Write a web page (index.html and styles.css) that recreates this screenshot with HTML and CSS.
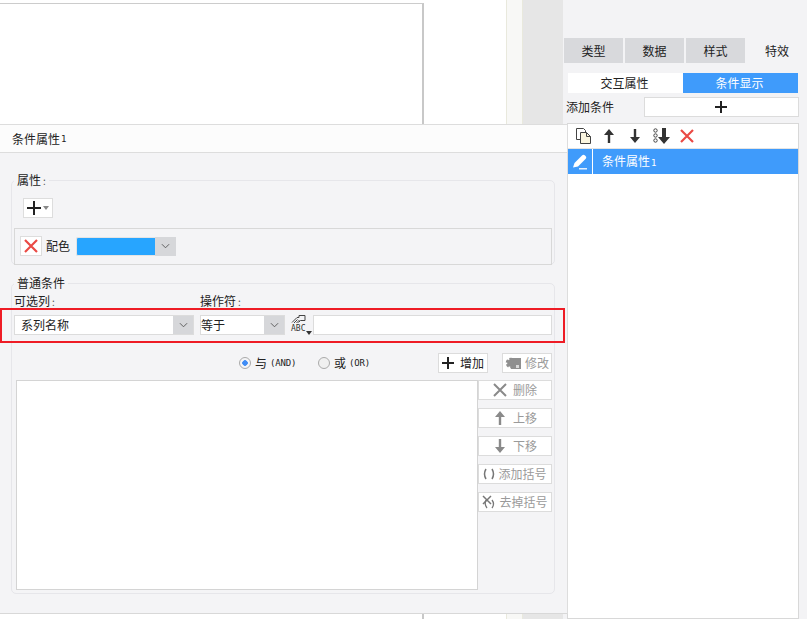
FILE: index.html
```html
<!DOCTYPE html>
<html lang="zh">
<head>
<meta charset="utf-8">
<title>条件属性</title>
<link rel="stylesheet" href="styles.css">
</head>
<body>
<div class="stage">
  <div class="canvas"><div class="paper"></div></div>
  <div class="strip"></div>
  <div class="gutter"></div>
  <aside class="panel">
    <nav class="tabs">
      <div class="tab">类型</div>
      <div class="tab">数据</div>
      <div class="tab">样式</div>
      <div class="tab tab-on">特效</div>
    </nav>
    <div class="subtabs">
      <div class="subtab">交互属性</div>
      <div class="subtab subtab-on">条件显示</div>
    </div>
    <div class="addrow">
      <span class="addlabel">添加条件</span>
      <div class="addbox">
        <svg class="i14" viewBox="0 0 14 14"><path d="M7 1v12M1 7h12" stroke="#222" stroke-width="2" fill="none"/></svg>
      </div>
    </div>
    <div class="list">
      <div class="listbar">
        <svg class="i18" viewBox="0 0 18 18"><path d="M1.500 1.500h7l2 2v2M1.500 1.500v11h4" fill="#fff" stroke="#444"/><path d="M5.500 5.500h6l4 4v7h-10z" fill="#fbf6e0" stroke="#444"/><path d="M11.500 5.500v4h4" fill="none" stroke="#444"/></svg>
        <svg class="i14 up" viewBox="0 0 14 14"><path d="M7 0l5 6H8.200v8H5.800V6H2z" fill="#333"/></svg>
        <svg class="i14 down" viewBox="0 0 14 14"><path d="M5.800 0h2.400v8H12l-5 6-5-6h3.800z" fill="#333"/></svg>
        <svg class="all" viewBox="0 0 17 16"><circle cx="2.500" cy="2.500" r="1.700" fill="none" stroke="#444"/><circle cx="2.500" cy="7.500" r="1.700" fill="none" stroke="#444"/><circle cx="2.500" cy="12.500" r="1.700" fill="none" stroke="#444"/><path d="M9 0h4v9h4l-6 7-6-7h4z" fill="#333"/></svg>
        <svg class="i14 del" viewBox="0 0 14 14"><path d="M1 1l12 12M13 1L1 13" stroke="#ea4a45" stroke-width="2.200" fill="none"/></svg>
      </div>
      <div class="listrow">
        <div class="pencil">
          <svg class="i16" viewBox="0 0 16 16"><path d="M1 13.500l1.500-4.500L10 1.500c1-1 2-1 3 0l.5.500c1 1 1 2 0 3L6 12.500z" fill="#fff"/><path d="M7 14.800h8" stroke="#fff" stroke-width="1.300"/></svg>
        </div>
        <div class="rowtext">条件属性<span class="latin">1</span></div>
      </div>
    </div>
  </aside>

  <section class="dialog">
    <header class="dhead">条件属性<span class="latin">1</span></header>
    <fieldset class="group attrs">
      <legend class="legend">属性<span class="colon">:</span></legend>
      <div class="plusbtn">
        <svg class="i14" viewBox="0 0 14 14"><path d="M7 0v14M0 7h14" stroke="#222" stroke-width="2" fill="none"/></svg>
        <span class="tri"></span>
      </div>
      <div class="attrrow">
        <div class="xbtn">
          <svg class="i14" viewBox="0 0 14 14"><path d="M1 1l12 12M13 1L1 13" stroke="#ea4a45" stroke-width="2.200" fill="none"/></svg>
        </div>
        <span class="attrname">配色</span>
        <div class="color"></div>
        <div class="arrow arrow-color"><svg class="chev" viewBox="0 0 10 6"><path d="M1 1l4 4 4-4" stroke="#555" fill="none"/></svg></div>
      </div>
    </fieldset>

    <fieldset class="group cond">
      <legend class="legend">普通条件</legend>
      <div class="labels">
        <span class="lab lab-a">可选列<span class="colon">:</span></span>
        <span class="lab">操作符<span class="colon">:</span></span>
      </div>
      <div class="condrow">
        <div class="combo combo-a"><span class="cval">系列名称</span><div class="arrow"><svg class="chev" viewBox="0 0 10 6"><path d="M1 1l4 4 4-4" stroke="#555" fill="none"/></svg></div></div>
        <div class="combo combo-b"><span class="cval cval-b">等于</span><div class="arrow"><svg class="chev" viewBox="0 0 10 6"><path d="M1 1l4 4 4-4" stroke="#555" fill="none"/></svg></div></div>
        <div class="abc">
          <svg class="abcicon" viewBox="0 0 15 9"><path d="M1 7.500L6 2.500h2V.5h6v5H9.500L7.500 7.500" fill="none" stroke="#444"/><path d="M3 8l3.500-3.500M5.500 8l3-3" stroke="#444"/></svg>
          <span class="abctext">ABC</span>
          <span class="tri tri-abc"></span>
        </div>
        <div class="input"></div>
      </div>
      <div class="logicrow">
        <label class="radio"><span class="dot dot-on"></span>与<span class="mono">(AND)</span></label>
        <label class="radio radio-b"><span class="dot"></span>或<span class="mono">(OR)</span></label>
        <div class="btn btn-add">
          <svg class="i12" viewBox="0 0 12 12"><path d="M6 0v12M0 6h12" stroke="#222" stroke-width="2" fill="none"/></svg>增加
        </div>
        <div class="btn btn-off btn-edit">
          <svg class="i16g" viewBox="0 0 16 14"><rect x="6" y="2" width="10" height="11" fill="#8f8f8f"/><circle cx="6" cy="7" r="3.800" fill="#8f8f8f" stroke="#8f8f8f" stroke-width="3" stroke-dasharray="2.500 1.500"/><rect x="11" y="9" width="3" height="3" fill="#d8d8d8"/></svg>修改
        </div>
      </div>
      <div class="editor">
        <div class="canvasbox"></div>
        <div class="sidebtns">
          <div class="btn btn-off side">
            <svg class="i14" viewBox="0 0 14 14"><path d="M1 1l12 12M13 1L1 13" stroke="#8a8a8a" stroke-width="2" fill="none"/></svg>删除
          </div>
          <div class="btn btn-off side">
            <svg class="i14" viewBox="0 0 14 14"><path d="M7 0l5 6H8.200v8H5.800V6H2z" fill="#8a8a8a"/></svg>上移
          </div>
          <div class="btn btn-off side">
            <svg class="i14" viewBox="0 0 14 14"><path d="M5.800 0h2.400v8H12l-5 6-5-6h3.800z" fill="#8a8a8a"/></svg>下移
          </div>
          <div class="btn btn-off side side-tight">
            <svg class="i12" viewBox="0 0 12 12"><path d="M3 1Q0 6 3 11M9 1q3 5 0 10" stroke="#777" stroke-width="1.500" fill="none"/></svg>添加括号
          </div>
          <div class="btn btn-off side side-tight">
            <svg class="i14" viewBox="0 0 14 14"><path d="M1 1l8 8M9 1L1 9" stroke="#777" stroke-width="1.500" fill="none"/><path d="M4 5q-2 4 1 8M10 5q3 4 0 8" stroke="#777" stroke-width="1.300" fill="none"/></svg>去掉括号
          </div>
        </div>
      </div>
    </fieldset>
    <div class="redbox"></div>
  </section>
</div>
</body>
</html>
```
FILE: styles.css
```css
* { box-sizing: border-box; }
html, body { margin: 0; padding: 0; }
body {
  font-family: "Noto Sans CJK SC", "Liberation Sans", sans-serif;
  font-size: 12px;
  line-height: 14px;
  color: #222;
  background: #fff;
}
.stage {
  position: relative;
  width: 807px;
  height: 619px;
  overflow: hidden;
  display: flex;
}
.canvas { width: 507px; flex: none; background: #fff; border-right: 1px solid #e9e9dd; padding-top: 3px; }
.paper { width: 424px; height: 640px; border-top: 1px solid #ccc; border-right: 2px solid #c8c8c8; }
.strip { width: 16px; flex: none; background: #f8f8f6; border-right: 1px solid #e9e9dd; }
.gutter { width: 40px; flex: none; background: #e6e6e6; }
.panel { flex: 1; background: #f3f3f5; padding-top: 38px; display: flex; flex-direction: column; }
.tabs { display: flex; height: 25px; gap: 2px; padding-left: 1px; flex: none; }
.tab { width: 59px; background: #d8d9dc; display: flex; align-items: center; justify-content: center; }
.tab-on { background: #f3f3f5; width: 60px; }
.subtabs { display: flex; margin: 10px 0 0 5px; height: 20px; flex: none; }
.subtab { width: 115px; background: #fff; display: flex; align-items: center; justify-content: center; padding-right: 2px; }
.subtab-on { background: #3f9bfb; color: #fff; }
.addrow { display: flex; align-items: center; margin: 4px 0 0 4px; height: 20px; flex: none; }
.addlabel { margin-left: -1px; flex: none; width: 78px; }
.addbox { width: 155px; height: 20px; background: #fff; border: 1px solid #dcdcdc; display: flex; align-items: center; justify-content: center; padding-right: 2px; }
.list { margin: 6px 0 0 4px; width: 232px; flex: 1; background: #fff; border: 1px solid #d8d8d8; }
.listbar { height: 25px; display: flex; align-items: center; padding-left: 7px; border-bottom: 1px solid #e4e4e4; }
.up { margin-left: 9px; }
.down { margin-left: 12px; }
.all { margin-left: 11px; width: 17px; height: 16px; flex: none; }
.del { margin-left: 10px; }
.listrow { height: 25px; display: flex; background: #3f9bfb; color: #fff; align-items: center; }
.pencil { width: 25px; height: 25px; border-right: 1px solid #fff; display: flex; align-items: center; justify-content: center; }
.rowtext { padding-left: 9px; }
.latin { font-family: "DejaVu Sans Mono", monospace; font-size: 9px; margin-left: 1px; }
.i12 { width: 12px; height: 12px; flex: none; }
.i14 { width: 14px; height: 14px; flex: none; }
.i16 { width: 16px; height: 16px; flex: none; }
.i18 { width: 18px; height: 18px; flex: none; }
.i16g { width: 16px; height: 14px; flex: none; }

.dialog {
  position: absolute;
  left: 0;
  top: 124px;
  width: 568px;
  height: 490px;
  background: #f4f4f6;
  border-top: 1px solid #ddd;
  border-right: 1px solid #ddd;
  border-bottom: 1px solid #d8d8d8;
}
.dhead { height: 28px; padding-left: 12px; background: #fcfcfc; border-bottom: 1px solid #ddd; display: flex; align-items: center; }
.group { margin: 0 0 0 11px; padding: 0; width: 544px; border: 1px solid #e6e6ea; border-radius: 5px; min-width: 0; }
.attrs { height: 92px; margin-top: 20px; padding: 0 1px 0 2px; }
.cond { height: 318px; margin-top: 11px; padding: 0 2px; }
.legend { margin-left: 0; padding: 0 3px; font-size: 12px; line-height: 14px; }
.colon { color: #555; font-size: 10px; margin-left: 2px; }
.plusbtn { margin: 10px 0 0 9px; width: 30px; height: 20px; background: #fff; border: 1px solid #ddd; display: flex; align-items: center; padding-left: 3px; gap: 2px; }
.tri { width: 0; height: 0; border-left: 3px solid transparent; border-right: 3px solid transparent; border-top: 4px solid #888; }
.attrrow { margin-top: 10px; height: 37px; width: 538px; border: 1px solid #d8d8d8; display: flex; align-items: center; padding: 0 0 1px 5px; }
.xbtn { width: 22px; height: 20px; background: #fff; border: 1px solid #ddd; display: flex; align-items: center; justify-content: center; }
.attrname { margin-left: 4px; width: 30px; }
.color { width: 79px; height: 19px; background: #27a5ff; border: 1px solid #e4e4e4; border-right: 0; border-radius: 2px 0 0 2px; }
.arrow { width: 20px; height: 100%; background: #d6d7da; display: flex; align-items: center; justify-content: center; flex: none; }
.arrow-color { height: 19px; width: 21px; }
.chev { width: 9px; height: 6px; }
.labels { display: flex; height: 14px; margin-top: 4px; padding-left: 0; }
.lab-a { width: 186px; }
.condrow { display: flex; align-items: center; height: 20px; margin-top: 7px; }
.combo { height: 20px; background: #fff; border: 1px solid #dcdcdc; display: flex; align-items: center; justify-content: space-between; }
.combo-a { width: 180px; }
.combo-b { width: 85px; margin-left: 6px; }
.cval { padding-left: 6px; }
.cval-b { padding-left: 0; }
.abc { position: relative; width: 23px; height: 20px; margin-left: 5px; display: flex; }
.abcicon { position: absolute; left: 1px; top: 0; width: 15px; height: 9px; }
.abctext { position: absolute; left: 1px; top: 10px; font-family: "DejaVu Sans Mono", monospace; font-size: 8px; line-height: 8px; color: #333; }
.tri-abc { position: absolute; left: 16px; top: 16px; border-top-color: #333; }
.input { width: 239px; height: 20px; margin-left: 0; background: #fff; border: 1px solid #dcdcdc; }
.logicrow { display: flex; align-items: center; height: 20px; margin-top: 18px; padding-left: 225px; }
.radio { display: flex; align-items: center; width: 79px; }
.radio-b { width: 120px; }
.dot { width: 12px; height: 12px; border-radius: 50%; border: 1px solid #aaa; background: #f0f0f0; margin-right: 4px; }
.dot-on { background: radial-gradient(circle, #3f8cf5 0 2.500px, #f4f4f6 3px); }
.mono { font-family: "DejaVu Sans Mono", monospace; font-size: 9px; margin-left: 3px; letter-spacing: -0.2px; }
.btn { height: 20px; background: #fff; border: 1px solid #dcdcdc; display: flex; align-items: center; justify-content: center; gap: 6px; }
.btn-add { width: 50px; }
.btn-edit { width: 50px; margin-left: 14px; gap: 4px; }
.btn-off { color: #9a9a9a; }
.editor { display: flex; margin-top: 7px; }
.canvasbox { width: 462px; height: 210px; background: #fff; border: 1px solid #d4d4d4; margin-left: 2px; flex: none; }
.sidebtns { width: 74px; display: flex; flex-direction: column; gap: 8px; }
.side { width: 74px; }
.side-tight { gap: 3px; }
.redbox { position: absolute; left: 0; top: 183px; width: 565px; height: 35px; border: 2px solid #ee1c25; }
```
